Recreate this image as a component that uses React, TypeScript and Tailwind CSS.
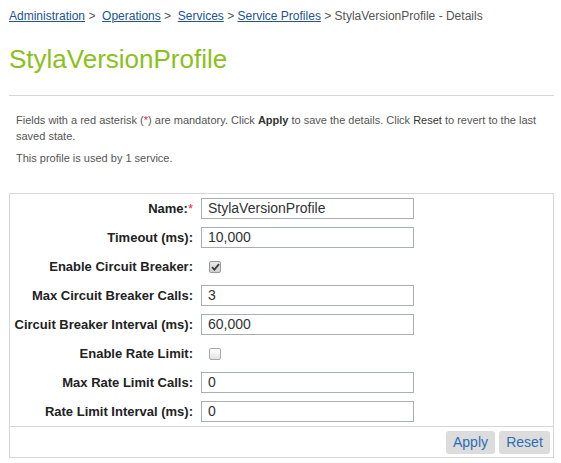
import React from "react";

const font = { fontFamily: '"Liberation Sans", Arial, sans-serif' };

type Field = {
  label: string;
  value?: string;
  checkbox?: boolean;
  checked?: boolean;
  required?: boolean;
};

const fields: Field[] = [
  { label: "Name:", value: "StylaVersionProfile", required: true },
  { label: "Timeout (ms):", value: "10,000" },
  { label: "Enable Circuit Breaker:", checkbox: true, checked: true },
  { label: "Max Circuit Breaker Calls:", value: "3" },
  { label: "Circuit Breaker Interval (ms):", value: "60,000" },
  { label: "Enable Rate Limit:", checkbox: true, checked: false },
  { label: "Max Rate Limit Calls:", value: "0" },
  { label: "Rate Limit Interval (ms):", value: "0" },
];

const CheckBox: React.FC<{ checked: boolean }> = ({ checked }) => (
  <span
    className={`ml-[8px] flex h-[12px] w-[12px] items-center justify-center rounded-[2px] border ${
      checked
        ? "border-[#9a9a9a] bg-gradient-to-b from-[#e8e8e8] to-[#cfcfcf]"
        : "border-[#a8a8a8] bg-gradient-to-b from-[#ffffff] to-[#e2e2e2]"
    }`}
  >
    {checked && (
      <svg width="9" height="8" viewBox="0 0 9 8">
        <path
          d="M1 4.2 L3.4 6.6 L8 1.2"
          fill="none"
          stroke="#3a3a3a"
          strokeWidth="1.8"
        />
      </svg>
    )}
  </span>
);

const App: React.FC = () => {
  return (
    <div className="min-h-[463px] w-[561px] bg-white pl-[9px]" style={font}>
      <div className="w-[545px]">
        <div className="pt-[8px] text-[12px] leading-[16px] text-[#555]">
          <a href="#" className="text-[#22548d] underline">
            Administration
          </a>{" "}
          &gt;&nbsp;{" "}
          <a href="#" className="text-[#22548d] underline">
            Operations
          </a>{" "}
          &gt;&nbsp;{" "}
          <a href="#" className="text-[#22548d] underline">
            Services
          </a>{" "}
          &gt;{" "}
          <a href="#" className="text-[#22548d] underline">
            Service Profiles
          </a>{" "}
          &gt; StylaVersionProfile - Details
        </div>

        <h1 className="mt-[20px] text-[26px] leading-[30px] text-[#8ac11b]">
          StylaVersionProfile
        </h1>

        <div className="mt-[21px] h-px bg-[#d6d6d6]" />

        <div className="mt-[16px] pl-[7px] text-[11px] leading-[16px] text-[#555]">
          <p>
            Fields with a red asterisk (<span className="text-[#e2215a]">*</span>)
            are mandatory. Click <b className="text-[#333]">Apply</b> to save the
            details. Click <span className="text-[#333]">Reset</span> to revert
            to the last saved state.
          </p>
          <p className="mt-[6px]">This profile is used by 1 service.</p>
        </div>

        <div className="mt-[27px] border border-[#d6d6d6]">
          {fields.map((f) => (
            <div key={f.label} className="flex h-[29px] items-center">
              <div className="w-[191px] pr-[8px] text-right text-[13px] font-bold text-[#222]">
                {f.label}
                {f.required && <span className="text-[#e2215a] font-normal">*</span>}
              </div>
              {f.checkbox ? (
                <CheckBox checked={!!f.checked} />
              ) : (
                <input
                  readOnly
                  value={f.value}
                  className="h-[21px] w-[213px] border border-[#a7aeb6] pl-[6px] text-[14px] text-[#333] outline-none"
                  style={font}
                />
              )}
            </div>
          ))}
          <div className="flex justify-end gap-[4px] border-t border-[#d6d6d6] pb-[3px] pr-[3px] pt-[4px]">
            <button className="h-[23px] w-[49px] rounded-[3px] bg-[#dcdcdc] text-[14px] text-[#2e6db4]">
              Apply
            </button>
            <button className="h-[23px] w-[51px] rounded-[3px] bg-[#dcdcdc] text-[14px] text-[#2e6db4]">
              Reset
            </button>
          </div>
        </div>
      </div>
    </div>
  );
};

export default App;
